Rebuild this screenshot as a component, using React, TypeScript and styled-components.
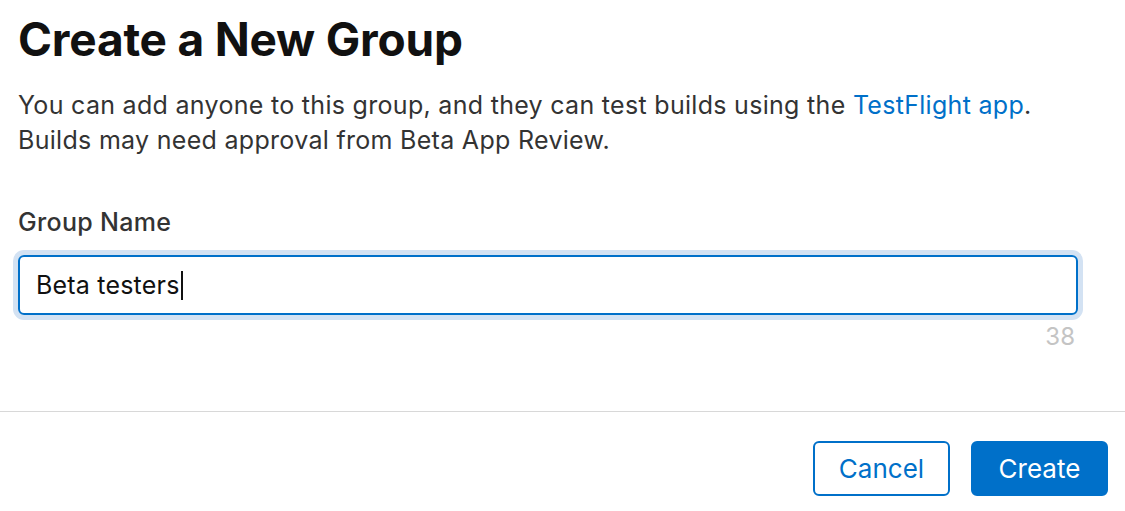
import { createGlobalStyle } from 'styled-components';
import styled from 'styled-components';

const GlobalStyle = createGlobalStyle`
  html, body {
    margin: 0;
    padding: 0;
    background: #fff;
  }
  body {
    font-family: Inter, "Liberation Sans", sans-serif;
    color: #1d1d1f;
    -webkit-font-smoothing: antialiased;
  }
`;

const Sheet = styled.div`
  width: 1125px;
  height: 511px;
  display: flex;
  flex-direction: column;
  overflow: hidden;
`;

const Body = styled.div`
  padding: 10px 47px 0 18px;
  display: flex;
  flex-direction: column;
`;

const Title = styled.h1`
  margin: 0;
  font-size: 46px;
  line-height: 58px;
  font-weight: 700;
  color: #111;
  letter-spacing: -0.2px;
`;

const Intro = styled.p`
  margin: 20px 0 0;
  font-size: 25px;
  line-height: 35px;
  letter-spacing: 0.3px;
  color: #333;
  white-space: nowrap;
`;

const Link = styled.a`
  color: #0070c9;
  text-decoration: none;
`;

const Label = styled.label`
  margin-top: 49px;
  font-size: 25px;
  line-height: 30px;
  letter-spacing: 0.3px;
  font-weight: 500;
  color: #333;
`;

const Field = styled.div`
  margin-top: 18px;
  box-sizing: border-box;
  height: 60px;
  padding: 0 16px;
  display: flex;
  align-items: center;
  border: 2px solid #0070c9;
  border-radius: 6px;
  box-shadow: 0 0 0 5px #d3e2f3;
  font-size: 25px;
  letter-spacing: 0.2px;
  color: #111;
`;

const Caret = styled.span`
  display: inline-block;
  width: 2px;
  height: 29px;
  margin-left: 1px;
  background: #111;
`;

const Counter = styled.div`
  margin-top: 7px;
  padding-right: 3px;
  text-align: right;
  font-size: 24px;
  line-height: 30px;
  color: #c4c4c4;
`;

const Footer = styled.div`
  margin-top: auto;
  border-top: 1px solid #d8d8d8;
  height: 100px;
  box-sizing: border-box;
  padding: 29px 17px 0 0;
  display: flex;
  justify-content: flex-end;
  align-items: flex-start;
  gap: 21px;
`;

const Button = styled.button<{ $primary?: boolean }>`
  box-sizing: border-box;
  width: 137px;
  height: 55px;
  padding: 0;
  border-radius: 6px;
  border: 2px solid #0070c9;
  background: ${p => (p.$primary ? '#0070c9' : '#fff')};
  color: ${p => (p.$primary ? '#fff' : '#0070c9')};
  font-family: inherit;
  font-size: 26px;
  font-weight: 400;
  cursor: pointer;
`;

export default function App() {
  return (
    <>
      <GlobalStyle />
      <Sheet>
        <Body>
          <Title>Create a New Group</Title>
          <Intro>
            You can add anyone to this group, and they can test builds using the{' '}
            <Link href="#">TestFlight app</Link>.
            <br />
            Builds may need approval from Beta App Review.
          </Intro>
          <Label id="group-name-label">Group Name</Label>
          <Field role="textbox" aria-labelledby="group-name-label">
            <span>Beta testers</span>
            <Caret />
          </Field>
          <Counter>38</Counter>
        </Body>
        <Footer>
          <Button>Cancel</Button>
          <Button $primary>Create</Button>
        </Footer>
      </Sheet>
    </>
  );
}
